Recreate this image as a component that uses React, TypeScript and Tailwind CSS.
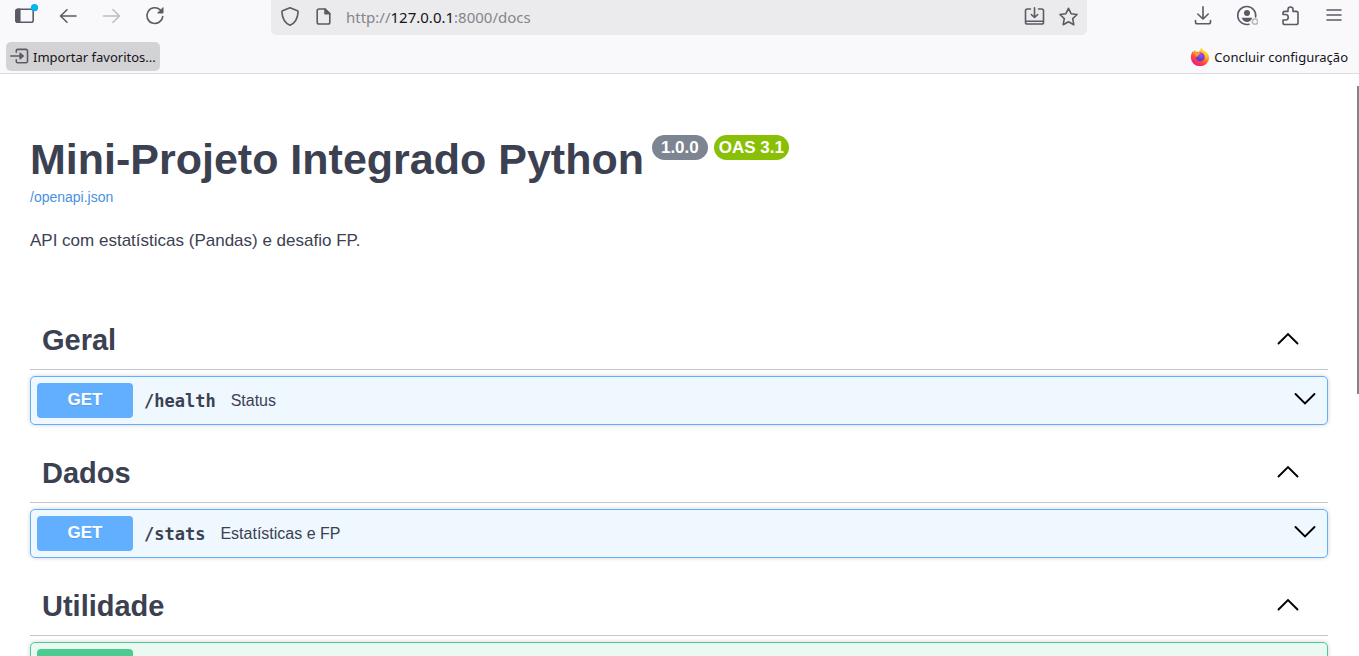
import type { ReactNode } from "react";

type Method = "GET" | "POST";

interface Operation {
  method: Method;
  label?: string;
  path?: string;
  summary?: string;
}

interface Section {
  tag: string;
  operation: Operation;
}

const sections: Section[] = [
  { tag: "Geral", operation: { method: "GET", label: "GET", path: "/health", summary: "Status" } },
  { tag: "Dados", operation: { method: "GET", label: "GET", path: "/stats", summary: "Estatísticas e FP" } },
  { tag: "Utilidade", operation: { method: "POST" } },
];

const rowStyles: Record<Method, string> = {
  GET: "border-[#61affe] bg-[#eff7ff]",
  POST: "border-[#49cc90] bg-[#ebf9f3]",
};

const methodStyles: Record<Method, string> = {
  GET: "bg-[#61affe]",
  POST: "bg-[#49cc90]",
};

function IconButton({ label, children }: { label: string; children: ReactNode }) {
  return (
    <button type="button" aria-label={label} className="flex size-6 shrink-0 items-center justify-center text-[#5b5b66]">
      {children}
    </button>
  );
}

function Glyph({ children, className = "size-6" }: { children: ReactNode; className?: string }) {
  return (
    <svg
      viewBox="0 0 24 24"
      className={className}
      fill="none"
      stroke="currentColor"
      strokeWidth="1.6"
      strokeLinecap="round"
      strokeLinejoin="round"
      aria-hidden="true"
    >
      {children}
    </svg>
  );
}

function FirefoxLogo() {
  return (
    <svg viewBox="0 0 20 20" className="size-5" aria-hidden="true">
      <defs>
        <linearGradient id="flame" x1="0.8" y1="0.05" x2="0.25" y2="0.95">
          <stop offset="0.1" stopColor="#fff044" />
          <stop offset="0.35" stopColor="#ffa826" />
          <stop offset="0.65" stopColor="#ff5038" />
          <stop offset="1" stopColor="#f0148c" />
        </linearGradient>
        <radialGradient id="globe" cx="0.6" cy="0.3" r="0.7">
          <stop offset="0" stopColor="#a24bf4" />
          <stop offset="1" stopColor="#4b3ac0" />
        </radialGradient>
      </defs>
      <path
        d="M12.8 1c-.4 1.700-.1 2.700.6 3.600l2.300.9c2 1.500 3.400 3.500 3.400 6.100a9.100 8.600 0 0 1-18.200.1c0-2.700.6-4.700 1.900-6.700l.3 1.600L4.700 4l.8 1.700c1.300-.3 2.400-.1 3.400.5C9.600 3.900 11.100 2 12.800 1z"
        fill="url(#flame)"
      />
      <circle cx="10.200" cy="10.900" r="4.400" fill="url(#globe)" />
      <path d="M3.600 6.600c1.500-.8 3.500-.8 4.800.1.900.1 1.700.1 2.100.6-.2.900-1.300 1.200-2 1.600-.2 1.300-1.400 1.400-2 2.600-.6-2-1.700-3.300-2.900-4.900z" fill="#ff9a2b" />
      <path d="M14.700 5.500c2.600 2.300 3 6.200.9 8.400 1-2.800.2-5.500-2.200-7.100z" fill="#ffd13b" />
    </svg>
  );
}

function Chevron({ direction }: { direction: "up" | "down" }) {
  return (
    <svg viewBox="0 0 24 24" className="size-6 shrink-0 text-black" fill="none" stroke="currentColor" strokeWidth="1.9" strokeLinecap="round" aria-hidden="true">
      <path d={direction === "up" ? "M2.500 15.500 12 6 21.500 15.500" : "M2.500 5 12 14.500 21.500 5"} />
    </svg>
  );
}

function BrowserBar() {
  return (
    <header className="shrink-0 border-b border-[#dcdce0] bg-[#f9f9fb] font-['Noto_Sans','Open_Sans',sans-serif]">
      <div className="flex h-[35px] items-start">
        <nav aria-label="Navegação" className="flex w-[271px] shrink-0 gap-[19px] pt-1 pl-[14px]">
          <IconButton label="Barra lateral">
            <Glyph>
              <rect x="1.900" y="5.200" width="17.300" height="13" rx="2" />
              <path d="M2 7.200a2 2 0 0 1 2-2H5.800v13H4a2 2 0 0 1-2-2z" fill="currentColor" />
              <circle cx="20.500" cy="3.600" r="3.600" fill="#00b3f4" stroke="none" />
            </Glyph>
          </IconButton>
          <IconButton label="Voltar">
            <Glyph><path d="M19 12H3.500M10 5.700 3.500 12l6.500 6.300" /></Glyph>
          </IconButton>
          <button type="button" disabled aria-label="Avançar" className="flex size-6 shrink-0 items-center justify-center text-[#bdbdc2]">
            <Glyph><path d="M3.500 12h16M13 5.700l6.500 6.300-6.500 6.300" /></Glyph>
          </button>
          <IconButton label="Recarregar">
            <Glyph>
              <path d="M19.700 12.500A7.900 7.900 0 1 1 17.200 5.800L19 7.500" />
              <path d="M20 4v5h-5z" fill="currentColor" strokeWidth="1" />
            </Glyph>
          </IconButton>
        </nav>
        <div className="flex h-full min-w-0 flex-1 items-start gap-[9px] rounded-b-[5px] bg-[#ebebed] px-[7px] pt-1">
          <IconButton label="Proteção">
            <Glyph><path d="M12 3.800 19.500 6.800c.5.300.7.700.6 1.300-.4 5.800-2.600 10.800-8.100 13.200-5.500-2.400-7.700-7.400-8.100-13.200-.1-.6.1-1 .6-1.300z" /></Glyph>
          </IconButton>
          <IconButton label="Informações do site">
            <Glyph>
              <path d="M14 5H8A1.800 1.800 0 0 0 6.200 6.800v11.400A1.800 1.800 0 0 0 8 20h9a1.800 1.800 0 0 0 1.800-1.800V9.800z" />
              <path d="M14 5v4.800h4.800z" fill="currentColor" />
            </Glyph>
          </IconButton>
          <a href="http://127.0.0.1:8000/docs" className="min-w-0 flex-1 pt-[2px] pl-0.5 text-[15px] leading-[22px] text-[#85858a]">
            http://<span className="text-[#15141a]">127.0.0.1</span>:8000/docs
          </a>
          <div className="flex gap-[10px]">
            <IconButton label="Instalar">
              <Glyph>
                <path d="M8.500 5H5.300A1.800 1.800 0 0 0 3.500 6.800v11.400A1.800 1.800 0 0 0 5.300 20h14.400a1.800 1.800 0 0 0 1.800-1.800V6.800A1.800 1.800 0 0 0 19.700 5H16.500M3.500 17.200h18M12.500 3.800v9.500M9.300 10.500l3.200 3 3.200-3" />
              </Glyph>
            </IconButton>
            <IconButton label="Adicionar aos favoritos">
              <Glyph>
                <path d="m12.500 4.300 2.600 5.400 6 .8-4.400 4.200 1.100 6-5.300-2.900-5.300 2.900 1.100-6-4.400-4.200 6-.8z" />
              </Glyph>
            </IconButton>
          </div>
        </div>
        <div className="flex w-[272px] shrink-0 justify-end gap-5 pt-1 pr-[13px]">
          <IconButton label="Downloads">
            <Glyph><path d="M13 2.800v12M7.800 10l5.200 5 5.200-5M5.500 16.500v1.500A1.800 1.800 0 0 0 7.300 19.800h11.400a1.800 1.800 0 0 0 1.800-1.800v-1.500" /></Glyph>
          </IconButton>
          <IconButton label="Conta">
            <Glyph>
              <path d="M15 20.200A9 9 0 1 1 21.600 13" />
              <circle cx="13" cy="9" r="3" fill="currentColor" stroke="none" />
              <path d="M7.800 13.800h10.400c-.6 2.600-2.600 4.200-5.200 4.200S8.400 16.400 7.800 13.800z" fill="currentColor" stroke="none" />
              <circle cx="21" cy="17.600" r="2.700" stroke="#b8b8be" strokeWidth="1.500" />
            </Glyph>
          </IconButton>
          <IconButton label="Extensões">
            <Glyph>
              <path d="M5 10.500V9.200A1.800 1.800 0 0 1 6.800 7.400H10V5.500a2.500 2.500 0 0 1 5 0v1.900h3.200A1.800 1.800 0 0 1 20 9.200v9.500a1.800 1.800 0 0 1-1.800 1.800H6.800A1.800 1.800 0 0 1 5 18.700V16h2.500a2.300 2.300 0 0 0 0-5.500z" />
            </Glyph>
          </IconButton>
          <IconButton label="Menu">
            <Glyph><path d="M5 6h14M5 11h14M5 16h14" /></Glyph>
          </IconButton>
        </div>
      </div>
      <div className="flex h-[38px] items-center justify-between pt-[6px] pr-[11px] pb-0.5 pl-[6px] text-[13px] leading-5 text-[#15141a]">
        <button type="button" className="flex h-[29px] items-center gap-[3px] rounded-[5px] bg-[#d3d3d5] px-1">
          <Glyph className="size-5 text-[#5b5b66]">
            <path d="M7.500 7.500V5.800A1.800 1.800 0 0 1 9.300 4h9.900A1.800 1.800 0 0 1 21 5.800v12.400a1.800 1.800 0 0 1-1.800 1.800H9.300a1.800 1.800 0 0 1-1.800-1.800v-1.700M1 12h14" strokeWidth="1.900" />
            <path d="M12 8.500l4 3.500-4 3.500z" fill="currentColor" strokeWidth="1.500" />
          </Glyph>
          <span className="pt-0.5">Importar favoritos...</span>
        </button>
        <button type="button" className="flex items-center gap-1">
          <FirefoxLogo />
          <span className="pt-0.5">Concluir configuração</span>
        </button>
      </div>
    </header>
  );
}

function OperationRow({ operation }: { operation: Operation }) {
  return (
    <button
      type="button"
      aria-label={`${operation.method} ${operation.path ?? ""}`}
      className={`flex h-[49px] w-full items-center rounded-[5px] border pr-[10px] pl-[6px] text-left shadow-[0_0_4px_rgba(0,0,0,0.19)] ${rowStyles[operation.method]}`}
    >
      <span
        className={`h-[35px] w-24 shrink-0 rounded-[4px] text-center text-[17px] leading-[34px] font-bold text-white [text-shadow:0_1px_0_rgba(0,0,0,0.1)] ${methodStyles[operation.method]}`}
      >
        {operation.label}
      </span>
      <span className="ml-[11px] font-['DejaVu_Sans_Mono',monospace] text-[17px] leading-6 font-bold">{operation.path}</span>
      <span className="ml-[15px] flex-1 text-[16px] leading-6">{operation.summary}</span>
      <Chevron direction="down" />
    </button>
  );
}

export default function App() {
  return (
    <div className="flex h-screen flex-col overflow-hidden bg-white font-['Liberation_Sans',Arial,sans-serif] text-[#3b4151]">
      <BrowserBar />
      <main className="relative min-h-0 flex-1 overflow-hidden pt-[60px] pr-[31px] pl-[30px]">
        <div className="flex items-start gap-2">
          <h1 className="text-[43px] leading-[50px] font-bold">Mini-Projeto Integrado Python</h1>
          <div className="flex gap-[6px] pt-px text-[17px] leading-[25px] font-bold text-white">
            <span className="rounded-full bg-[#7d8492] px-[9px]">1.0.0</span>
            <span className="rounded-full bg-[#89bf04] px-[5px]">OAS 3.1</span>
          </div>
        </div>
        <a href="/openapi.json" className="mt-[3px] block w-fit text-[14px] leading-5 text-[#4990e2]">/openapi.json</a>
        <p className="mt-[22px] text-[17px] leading-6">API com estatísticas (Pandas) e desafio FP.</p>
        <div className="mt-[54px] flex flex-col gap-[15px]">
          {sections.map(({ tag, operation }) => (
            <section key={tag}>
              <h2 className="mb-[6px] border-b border-[#c4c6cb] text-[29px] font-bold">
                <button type="button" className="flex w-full items-center justify-between pt-[14px] pr-7 pb-[10px] pl-3 leading-[38px]">
                  {tag}
                  <Chevron direction="up" />
                </button>
              </h2>
              <OperationRow operation={operation} />
            </section>
          ))}
        </div>
        <div className="absolute top-3 right-0 h-[308px] w-0.5 bg-[#86868a]" />
      </main>
    </div>
  );
}
